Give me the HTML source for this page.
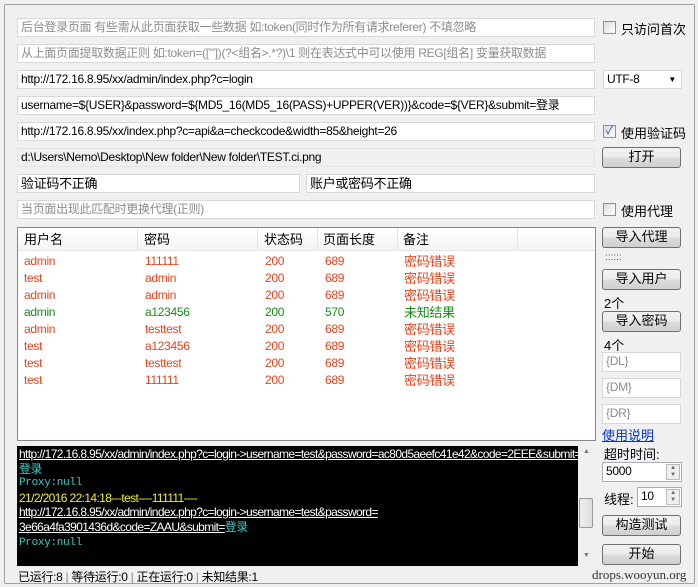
<!DOCTYPE html>
<html><head><meta charset="utf-8"><style>
*{box-sizing:border-box;margin:0;padding:0}
body{width:698px;height:587px;background:#f0f0f0;position:relative;overflow:hidden;font-family:"Liberation Sans","Noto Sans CJK SC",sans-serif;font-size:12px;color:#000}
.a{position:absolute;white-space:nowrap}
.f{position:absolute;background:#fff;border:1px solid #d8d8d8;height:19px;line-height:17px;padding-left:3px;white-space:nowrap;overflow:hidden;letter-spacing:-0.3px}
.g{color:#8c8c8c}
.btn{position:absolute;border:1px solid #707070;border-radius:3px;background:linear-gradient(#f2f2f2,#ebebeb 50%,#dddddd 51%,#cfcfcf);text-align:center;line-height:18px;height:21px;width:79px;font-size:13px}
.cb{position:absolute;width:13px;height:13px;border:1px solid #8f8f8f;background:linear-gradient(135deg,#dcdcdc,#fff)}
.r{color:#e8431c}.gr{color:#1a8a1a}
.con{position:absolute;left:17px;top:446px;width:561px;height:120px;background:#000;font-size:12px;line-height:14.5px;padding:1px 2px;letter-spacing:-0.62px;overflow:hidden}
.con div{white-space:nowrap}
.w{color:#fff;text-decoration:underline}.c{color:#36d0c8}.y{color:#f0f020}
.m{font-family:"Liberation Mono",monospace;font-size:11px;letter-spacing:-0.3px}
</style></head><body>
<div class="a" style="left:4px;top:4px;width:691px;height:580px;border:1px solid #a0a0a0;border-radius:2px"></div>
<div class="f g" style="left:17px;top:18px;width:578px">后台登录页面 有些需从此页面获取一些数据 如:token(同时作为所有请求referer) 不填忽略</div>
<div class="cb" style="left:603px;top:21px"></div><div class="a" style="left:621px;top:19px;font-size:13px">只访问首次</div>
<div class="f g" style="left:17px;top:44px;width:578px">从上面页面提取数据正则 如:token=(['"])(?&lt;组名&gt;.*?)\1 则在表达式中可以使用 REG[组名] 变量获取数据</div>
<div class="f" style="left:17px;top:70px;width:578px">http://172.16.8.95/xx/admin/index.php?c=login</div>
<div class="f" style="left:603px;top:70px;width:79px">UTF-8<span style="position:absolute;right:5px;top:0;font-size:8px">▼</span></div>
<div class="f" style="left:17px;top:96px;width:578px">username=${USER}&amp;password=${MD5_16(MD5_16(PASS)+UPPER(VER))}&amp;code=${VER}&amp;submit=登录</div>
<div class="f" style="left:17px;top:122px;width:578px">http://172.16.8.95/xx/index.php?c=api&amp;a=checkcode&amp;width=85&amp;height=26</div>
<div class="cb" style="left:603px;top:125px;font-size:11px;line-height:11px;color:#2a4a9a;text-align:center">✓</div><div class="a" style="left:621px;top:123px;font-size:13px">使用验证码</div>
<div class="f" style="left:17px;top:148px;width:578px;background:#f0f0f0;border-color:#e4e4e4">d:\Users\Nemo\Desktop\New folder\New folder\TEST.ci.png</div>
<div class="btn" style="left:602px;top:147px">打开</div>
<div class="f" style="left:17px;top:174px;width:283px;font-size:13px">验证码不正确</div>
<div class="f" style="left:306px;top:174px;width:289px;font-size:13px">账户或密码不正确</div>
<div class="f g" style="left:17px;top:200px;width:578px">当页面出现此匹配时更换代理(正则)</div>
<div class="cb" style="left:603px;top:203px"></div><div class="a" style="left:621px;top:201px;font-size:13px">使用代理</div>

<div class="a" style="left:17px;top:227px;width:579px;height:214px;background:#fff;border:1px solid #828790"></div>
<div class="a" style="left:18px;top:228px;width:577px;height:23px;background:linear-gradient(#fff,#f4f4f4);border-bottom:1px solid #e5e5e5;font-size:13px;line-height:23px">
<span class="a" style="left:6px">用户名</span><span class="a" style="left:126px">密码</span><span class="a" style="left:246px">状态码</span><span class="a" style="left:305px">页面长度</span><span class="a" style="left:385px">备注</span>
<span class="a" style="left:119px;top:0;width:1px;height:22px;background:#e5e5e5"></span><span class="a" style="left:239px;top:0;width:1px;height:22px;background:#e5e5e5"></span><span class="a" style="left:299px;top:0;width:1px;height:22px;background:#e5e5e5"></span><span class="a" style="left:379px;top:0;width:1px;height:22px;background:#e5e5e5"></span><span class="a" style="left:499px;top:0;width:1px;height:22px;background:#e5e5e5"></span>
</div>
<div class="a" style="left:24px;top:253px;width:560px;line-height:17px;letter-spacing:-0.3px">
<div style="position:relative;height:17px" class="r"><span class="a" style="left:0">admin</span><span class="a" style="left:121px">111111</span><span class="a" style="left:241px">200</span><span class="a" style="left:301px">689</span><span class="a" style="left:380px;font-size:13px">密码错误</span></div>
<div style="position:relative;height:17px" class="r"><span class="a" style="left:0">test</span><span class="a" style="left:121px">admin</span><span class="a" style="left:241px">200</span><span class="a" style="left:301px">689</span><span class="a" style="left:380px;font-size:13px">密码错误</span></div>
<div style="position:relative;height:17px" class="r"><span class="a" style="left:0">admin</span><span class="a" style="left:121px">admin</span><span class="a" style="left:241px">200</span><span class="a" style="left:301px">689</span><span class="a" style="left:380px;font-size:13px">密码错误</span></div>
<div style="position:relative;height:17px" class="gr"><span class="a" style="left:0">admin</span><span class="a" style="left:121px">a123456</span><span class="a" style="left:241px">200</span><span class="a" style="left:301px">570</span><span class="a" style="left:380px;font-size:13px">未知结果</span></div>
<div style="position:relative;height:17px" class="r"><span class="a" style="left:0">admin</span><span class="a" style="left:121px">testtest</span><span class="a" style="left:241px">200</span><span class="a" style="left:301px">689</span><span class="a" style="left:380px;font-size:13px">密码错误</span></div>
<div style="position:relative;height:17px" class="r"><span class="a" style="left:0">test</span><span class="a" style="left:121px">a123456</span><span class="a" style="left:241px">200</span><span class="a" style="left:301px">689</span><span class="a" style="left:380px;font-size:13px">密码错误</span></div>
<div style="position:relative;height:17px" class="r"><span class="a" style="left:0">test</span><span class="a" style="left:121px">testtest</span><span class="a" style="left:241px">200</span><span class="a" style="left:301px">689</span><span class="a" style="left:380px;font-size:13px">密码错误</span></div>
<div style="position:relative;height:17px" class="r"><span class="a" style="left:0">test</span><span class="a" style="left:121px">111111</span><span class="a" style="left:241px">200</span><span class="a" style="left:301px">689</span><span class="a" style="left:380px;font-size:13px">密码错误</span></div>
</div>

<div class="btn" style="left:602px;top:227px">导入代理</div>
<div class="a" style="left:605px;top:252px;font-size:10px;color:#555">::::::</div>
<div class="btn" style="left:602px;top:269px">导入用户</div>
<div class="a" style="left:604px;top:293px;font-size:13px">2个</div>
<div class="btn" style="left:602px;top:311px">导入密码</div>
<div class="a" style="left:604px;top:335px;font-size:13px">4个</div>
<div class="f g" style="left:602px;top:352px;width:79px;height:20px">{DL}</div>
<div class="f g" style="left:602px;top:378px;width:79px;height:20px">{DM}</div>
<div class="f g" style="left:602px;top:404px;width:79px;height:20px">{DR}</div>
<div class="a" style="left:602px;top:425px;color:#0033cc;text-decoration:underline;font-size:13px">使用说明</div>

<div class="con">
<div class="w">http://172.16.8.95/xx/admin/index.php?c=login-&gt;username=test&amp;password=ac80d5aeefc41e42&amp;code=2EEE&amp;submit=</div>
<div class="c">登录</div>
<div class="c m">Proxy:null</div>
<div class="y">21/2/2016 22:14:18---test----111111----</div>
<div class="w">http://172.16.8.95/xx/admin/index.php?c=login-&gt;username=test&amp;password=</div>
<div><span class="w">3e66a4fa3901436d&amp;code=ZAAU&amp;submit=</span><span class="c">登录</span></div>
<div class="c m" style="margin-top:2px">Proxy:null</div>
</div>
<div class="a" style="left:578px;top:446px;width:17px;height:120px;background:#f0f0f0">
<span class="a" style="left:5px;top:2px;font-size:7px;color:#777">▲</span>
<span class="a" style="left:1px;top:52px;width:14px;height:30px;border:1px solid #999;border-radius:2px;background:linear-gradient(90deg,#eee,#ddd)"></span>
<span class="a" style="left:5px;top:106px;font-size:7px;color:#777">▼</span></div>

<div class="a" style="left:604px;top:444px;font-size:13px">超时时间:</div>
<div class="f" style="left:602px;top:462px;width:80px;height:20px;border-color:#abadb3">5000<span class="a" style="right:1px;top:1px;width:14px;height:16px;border:1px solid #bbb;background:#eee;font-size:6px;line-height:7px;text-align:center;color:#666">▲<br>▼</span></div>
<div class="a" style="left:604px;top:489px;font-size:13px">线程:</div>
<div class="f" style="left:637px;top:487px;width:45px;height:20px;border-color:#abadb3">10<span class="a" style="right:1px;top:1px;width:14px;height:16px;border:1px solid #bbb;background:#eee;font-size:6px;line-height:7px;text-align:center;color:#666">▲<br>▼</span></div>
<div class="btn" style="left:602px;top:515px">构造测试</div>
<div class="btn" style="left:602px;top:544px">开始</div>

<div class="a" style="left:18px;top:568px;font-size:12px;letter-spacing:-0.3px">已运行:8 <span style="color:#888">|</span> 等待运行:0 <span style="color:#888">|</span> 正在运行:0 <span style="color:#888">|</span> 未知结果:1</div>
<div class="a" style="left:592px;top:567px;font-family:'Liberation Serif',serif;font-size:13px;color:#333">drops.wooyun.org</div>
</body></html>
